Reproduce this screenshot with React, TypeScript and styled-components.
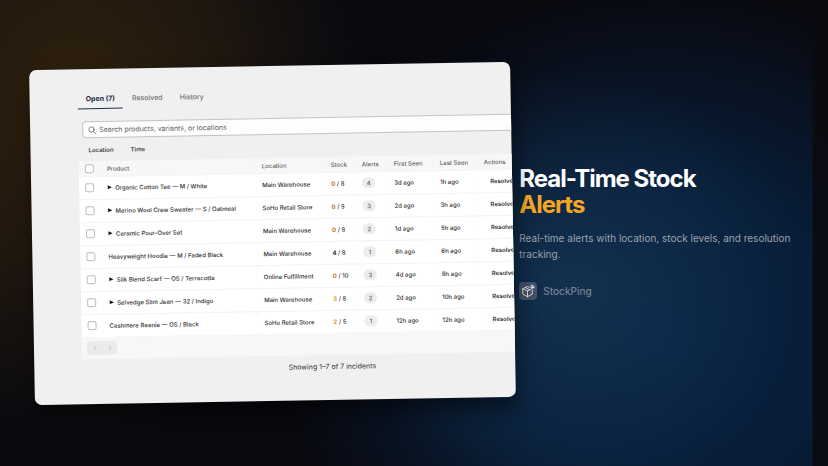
import React from "react";
import styled, { createGlobalStyle } from "styled-components";

const GlobalStyle = createGlobalStyle`
  * { box-sizing: border-box; }
  body {
    margin: 0;
    background: #09090f;
    font-family: Inter, "Liberation Sans", sans-serif;
  }
  button, input { font-family: inherit; }
`;

const Page = styled.main`
  min-height: 100vh;
  display: flex;
  align-items: center;
  gap: 6px;
  padding: 24px 32px;
  overflow: hidden;
  background:
    linear-gradient(to left, rgba(10, 10, 15, 0.9) 15px, transparent 16px),
    radial-gradient(ellipse 290px 340px at 9% 22%, rgba(54, 37, 14, 0.85) 0%, rgba(54, 37, 14, 0.5) 50%, transparent 100%),
    radial-gradient(ellipse 230px 220px at 69% 62%, rgba(30, 66, 98, 0.5) 0%, rgba(30, 66, 98, 0.25) 50%, transparent 100%),
    radial-gradient(ellipse 380px 350px at 80% 72%, rgba(7, 40, 78, 0.8) 0%, rgba(7, 40, 78, 0.65) 45%, transparent 100%),
    #09090f;
`;

const Panel = styled.section`
  flex: 0 0 63%;
  overflow: hidden;
  padding: 19px 0 28px 48px;
  border-radius: 7px;
  background: #f0f0f0;
  color: #303030;
  transform: rotate(-1deg);
  box-shadow: 2px 12px 20px rgba(0, 0, 0, 0.5);
`;

const TabList = styled.div`
  display: flex;
  gap: 1px;
`;

const Tab = styled.button<{ $active?: boolean }>`
  height: 21px;
  padding: 0 8px;
  border: 0;
  border-bottom: 1px solid ${(p) => (p.$active ? "#1d3048" : "transparent")};
  background: none;
  font-size: 7px;
  font-weight: ${(p) => (p.$active ? 700 : 500)};
  color: ${(p) => (p.$active ? "#1d2b40" : "#707070")};
`;

const Content = styled.div`
  width: 500px;
`;

const SearchBox = styled.label`
  display: flex;
  align-items: center;
  gap: 3px;
  height: 17px;
  margin: 12px 4px 0;
  padding: 0 5px;
  border: 1px solid #c4c4c4;
  border-radius: 4px;
  background: #fdfdfd;
  color: #606060;
`;

const SearchInput = styled.input`
  flex: 1;
  min-width: 0;
  padding: 0;
  border: 0;
  outline: 0;
  background: none;
  font-size: 7px;
  color: #303030;
  &::placeholder { color: #606060; opacity: 1; }
`;

const Filters = styled.div`
  display: flex;
  gap: 17px;
  height: 23px;
  padding: 0 10px;
`;

const Filter = styled.button`
  padding: 0;
  border: 0;
  background: none;
  font-size: 6px;
  font-weight: 600;
  color: #404040;
`;

const Table = styled.table`
  width: 100%;
  table-layout: fixed;
  border-collapse: collapse;
  font-size: 6px;
  line-height: 9px;
`;

const HeadCell = styled.th`
  height: 15px;
  padding: 0 0 0 6px;
  background: #f7f7f7;
  font-weight: 500;
  text-align: left;
  color: #616161;
`;

const Cell = styled.td`
  height: 23px;
  padding: 0 0 0 6px;
  border-top: 1px solid #f3f3f3;
  background: #ffffff;
  font-weight: 500;
  white-space: nowrap;
`;

const Check = styled.input`
  appearance: none;
  display: block;
  width: 9px;
  height: 9px;
  margin: 0;
  border: 1px solid #bcbcbc;
  border-radius: 2px;
  background: #ffffff;
`;

const Product = styled.span`
  display: flex;
  align-items: center;
  gap: 3px;
`;

const Stock = styled.span<{ $tone: string }>`
  font-weight: 700;
  color: ${(p) => p.$tone};
`;

const Badge = styled.span`
  display: block;
  width: 13px;
  border-radius: 5px;
  background: #ededed;
  line-height: 11px;
  text-align: center;
  color: #616161;
`;

const Resolve = styled.button`
  padding: 0 6px;
  border: 0;
  background: none;
  font-size: 6px;
  font-weight: 600;
  color: #303030;
`;

const Footer = styled.div`
  display: flex;
  align-items: center;
  height: 22px;
  padding: 0 5px;
  background: #f7f7f7;
`;

const PagerButton = styled.button<{ $side: "left" | "right" }>`
  display: grid;
  place-items: center;
  width: 15px;
  height: 14px;
  padding: 0;
  border: 0;
  border-radius: ${(p) => (p.$side === "left" ? "4px 0 0 4px" : "0 4px 4px 0")};
  background: #ebebeb;
  color: #d0d0d0;
`;

const Summary = styled.p`
  margin: 7px 0 0;
  font-size: 7px;
  line-height: 10px;
  text-align: center;
  color: #303030;
`;

const Copy = styled.section`
  flex: 1;
  min-width: 0;
  color: #ffffff;
`;

const Title = styled.h1`
  margin: 0;
  font-size: 24px;
  font-weight: 700;
  line-height: 26px;
  letter-spacing: -1px;
`;

const Accent = styled.span`
  display: block;
  color: #f5a623;
`;

const Lead = styled.p`
  margin: 12px 0 20px;
  font-size: 10px;
  line-height: 16px;
  color: #9ba3ad;
`;

const Brand = styled.div`
  display: flex;
  align-items: center;
  gap: 6px;
  font-size: 10px;
  font-weight: 500;
  color: #77828f;
`;

const Logo = styled.span`
  display: grid;
  place-items: center;
  width: 18px;
  height: 18px;
  border-radius: 4px;
  background: #435166;
`;

const AMBER = "#e0941a";
const RUST = "#c07414";
const INK = "#303030";

const incidents = [
  { product: "Organic Cotton Tee — M / White", group: true, location: "Main Warehouse", stock: 0, limit: 8, alerts: 4, first: "3d ago", last: "1h ago" },
  { product: "Merino Wool Crew Sweater — S / Oatmeal", group: true, location: "SoHo Retail Store", stock: 0, limit: 5, alerts: 3, first: "2d ago", last: "3h ago" },
  { product: "Ceramic Pour-Over Set", group: true, location: "Main Warehouse", stock: 0, limit: 8, alerts: 2, first: "1d ago", last: "5h ago" },
  { product: "Heavyweight Hoodie — M / Faded Black", group: false, location: "Main Warehouse", stock: 4, limit: 8, alerts: 1, first: "6h ago", last: "6h ago" },
  { product: "Silk Blend Scarf — OS / Terracotta", group: true, location: "Online Fulfillment", stock: 0, limit: 10, alerts: 3, first: "4d ago", last: "8h ago" },
  { product: "Selvedge Slim Jean — 32 / Indigo", group: true, location: "Main Warehouse", stock: 3, limit: 8, alerts: 2, first: "2d ago", last: "10h ago" },
  { product: "Cashmere Beanie — OS / Black", group: false, location: "SoHo Retail Store", stock: 2, limit: 5, alerts: 1, first: "12h ago", last: "12h ago" },
];

const columnWidths = [22, 155, 69, 31, 32, 46, 44, 101];
const headings = ["Product", "Location", "Stock", "Alerts", "First Seen", "Last Seen", "Actions"];

const stockTone = (n: number) => (n === 0 ? RUST : n < 4 ? AMBER : INK);

const SearchIcon = () => (
  <svg width="8" height="8" viewBox="0 0 16 16" fill="none" stroke="currentColor" strokeWidth="1.6" strokeLinecap="round" aria-hidden="true">
    <circle cx="6.8" cy="6.8" r="5.3" />
    <path d="M10.8 10.8 15 15" />
  </svg>
);

const Caret = () => (
  <svg width="5" height="5" viewBox="0 0 10 10" aria-hidden="true">
    <path d="M1 1 9.5 5 1 9z" fill="#1a1a1a" />
  </svg>
);

const Chevron = ({ d }: { d: string }) => (
  <svg width="6" height="6" viewBox="0 0 12 12" fill="none" stroke="currentColor" strokeWidth="2.4" aria-hidden="true">
    <path d={d} />
  </svg>
);

const BoxIcon = () => (
  <svg width="14" height="14" viewBox="0 0 28 28" fill="none" stroke="#e4e7ec" strokeWidth="1.8" strokeLinejoin="round" strokeLinecap="round" aria-hidden="true">
    <path d="M17 6.5 13 5 3.5 9.5V20L13 25.5 22.5 20V12" />
    <path d="M3.5 9.5 13 14 19.5 11M13 14V25.5" />
    <path d="M8.5 7 17 11" />
    <circle cx="22" cy="7" r="2" fill="#e4e7ec" />
    <path d="M20 2.5C24 1.5 27 4 26.5 8" />
  </svg>
);

export default function App() {
  return (
    <>
      <GlobalStyle />
      <Page>
        <Panel aria-label="Incidents">
          <TabList role="tablist">
            <Tab $active role="tab" aria-selected="true">Open (7)</Tab>
            <Tab role="tab" aria-selected="false">Resolved</Tab>
            <Tab role="tab" aria-selected="false">History</Tab>
          </TabList>
          <Content>
            <SearchBox>
              <SearchIcon />
              <SearchInput type="search" aria-label="Search incidents" placeholder="Search products, variants, or locations" />
            </SearchBox>
            <Filters>
              <Filter>Location</Filter>
              <Filter>Time</Filter>
            </Filters>
            <Table>
              <colgroup>
                {columnWidths.map((w, i) => <col key={i} width={w} />)}
              </colgroup>
              <thead>
                <tr>
                  <HeadCell><Check type="checkbox" aria-label="Select all" /></HeadCell>
                  {headings.map((h) => <HeadCell key={h} scope="col">{h}</HeadCell>)}
                </tr>
              </thead>
              <tbody>
                {incidents.map((row) => (
                  <tr key={row.product}>
                    <Cell><Check type="checkbox" aria-label={`Select ${row.product}`} /></Cell>
                    <Cell><Product>{row.group && <Caret />}{row.product}</Product></Cell>
                    <Cell>{row.location}</Cell>
                    <Cell><Stock $tone={stockTone(row.stock)}>{row.stock}</Stock> / {row.limit}</Cell>
                    <Cell><Badge>{row.alerts}</Badge></Cell>
                    <Cell>{row.first}</Cell>
                    <Cell>{row.last}</Cell>
                    <Cell><Resolve>Resolve</Resolve></Cell>
                  </tr>
                ))}
              </tbody>
            </Table>
            <Footer>
              <PagerButton $side="left" disabled aria-label="Previous page"><Chevron d="M8 2 4 6l4 4" /></PagerButton>
              <PagerButton $side="right" disabled aria-label="Next page"><Chevron d="m4 2 4 4-4 4" /></PagerButton>
            </Footer>
            <Summary>Showing 1–7 of 7 incidents</Summary>
          </Content>
        </Panel>
        <Copy>
          <Title>Real-Time Stock<Accent>Alerts</Accent></Title>
          <Lead>Real-time alerts with location, stock levels, and resolution tracking.</Lead>
          <Brand><Logo><BoxIcon /></Logo>StockPing</Brand>
        </Copy>
      </Page>
    </>
  );
}
